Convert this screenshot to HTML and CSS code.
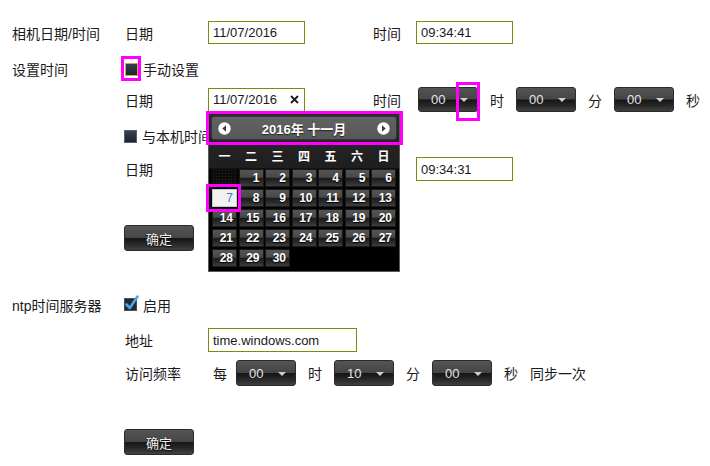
FILE: index.html
```html
<!DOCTYPE html>
<html lang="zh">
<head>
<meta charset="utf-8">
<title>时间设置</title>
<link rel="stylesheet" href="styles.css">
</head>
<body>
<div class="page">
  <div class="row r1">
    <div class="lbl">相机日期/时间</div>
    <div class="sub">日期</div>
    <div class="inp">11/07/2016</div>
    <div class="sub2">时间</div>
    <div class="inp">09:34:41</div>
  </div>
  <div class="row r2">
    <div class="lbl">设置时间</div>
    <span class="cb cb-focus"></span><span class="cbtext">手动设置</span>
  </div>
  <div class="row r3">
    <div class="lbl"></div>
    <div class="sub">日期</div>
    <div class="inp">11/07/2016<svg class="clear" width="9" height="9" viewBox="0 0 9 9"><path d="M1 1L8 8M8 1L1 8" stroke="#1a1a1a" stroke-width="1.8"/></svg></div>
    <div class="sub2 sub2-sel">时间</div>
    <div class="sel">00<span class="caret"></span></div><span class="unit">时</span>
    <div class="sel">00<span class="caret"></span></div><span class="unit">分</span>
    <div class="sel">00<span class="caret"></span></div><span class="unit">秒</span>
  </div>
  <div class="row r4">
    <div class="lbl"></div>
    <span class="cb"></span><span class="cbtext">与本机时间</span>
  </div>
  <div class="row r5">
    <div class="lbl"></div>
    <div class="sub">日期</div>
    <div class="inp inp-hidden"></div>
    <div class="sub2"></div>
    <div class="inp">09:34:31</div>
  </div>
  <div class="row rbtn1">
    <div class="lbl"></div>
    <div class="btn">确定</div>
  </div>
  <div class="row r6">
    <div class="lbl">ntp时间服务器</div>
    <svg class="cbc" width="17" height="17" viewBox="0 0 17 17"><rect x="0.5" y="4.5" width="12" height="12" fill="#1f2a38" stroke="#4a4f58"/><path d="M2.5 10.5L5.8 14L13.5 2.5" fill="none" stroke="#4da3e6" stroke-width="2.6" stroke-linecap="round" stroke-linejoin="round"/></svg><span class="cbtext">启用</span>
  </div>
  <div class="row r7">
    <div class="lbl"></div>
    <div class="sub">地址</div>
    <div class="inp inp-wide">time.windows.com</div>
  </div>
  <div class="row r8">
    <div class="lbl"></div>
    <div class="sub">访问频率</div>
    <span class="every">每</span>
    <div class="sel">00<span class="caret"></span></div><span class="unit">时</span>
    <div class="sel">10<span class="caret"></span></div><span class="unit">分</span>
    <div class="sel">00<span class="caret"></span></div><span class="unit">秒</span>
    <span class="sync">同步一次</span>
  </div>
  <div class="row rbtn2">
    <div class="lbl"></div>
    <div class="btn">确定</div>
  </div>

  <div class="cal">
    <div class="cal-head">
      <svg width="13" height="13" viewBox="0 0 13 13"><circle cx="6.5" cy="6.5" r="6.2" fill="#fff"/><path d="M8 3.3L4.3 6.5L8 9.7Z" fill="#3a3a3a"/></svg>
      <span class="cal-title">2016年 十一月</span>
      <svg width="13" height="13" viewBox="0 0 13 13"><circle cx="6.5" cy="6.5" r="6.2" fill="#fff"/><path d="M5 3.3L8.7 6.5L5 9.7Z" fill="#3a3a3a"/></svg>
    </div>
    <div class="cal-days">
      <span>一</span><span>二</span><span>三</span><span>四</span><span>五</span><span>六</span><span>日</span>
    </div>
    <div class="cal-grid">
      <span class="empty"></span><span class="d">1</span><span class="d">2</span><span class="d">3</span><span class="d">4</span><span class="d">5</span><span class="d">6</span>
      <span class="d today">7</span><span class="d">8</span><span class="d">9</span><span class="d">10</span><span class="d">11</span><span class="d">12</span><span class="d">13</span>
      <span class="d">14</span><span class="d">15</span><span class="d">16</span><span class="d">17</span><span class="d">18</span><span class="d">19</span><span class="d">20</span>
      <span class="d">21</span><span class="d">22</span><span class="d">23</span><span class="d">24</span><span class="d">25</span><span class="d">26</span><span class="d">27</span>
      <span class="d">28</span><span class="d">29</span><span class="d">30</span>
    </div>
  </div>

  <div class="hl hl-cb"></div>
  <div class="hl hl-arrow"></div>
  <div class="hl hl-head"></div>
  <div class="hl hl-today"></div>
</div>
</body>
</html>
```
FILE: styles.css
```css
html, body {
  margin: 0;
  background: #fff;
}
body {
  font-family: "Liberation Sans", "Noto Sans CJK SC", sans-serif;
  font-size: 14px;
  color: #1a1a1a;
}
.page {
  position: relative;
  width: 710px;
  height: 466px;
  box-sizing: border-box;
  padding: 21px 0 0 12px;
  overflow: hidden;
}
.row {
  display: flex;
  align-items: center;
  white-space: nowrap;
}
.lbl { width: 113px; flex: none; }
.sub { width: 83px; flex: none; }
.sub2 { width: 43px; margin-left: 68px; flex: none; }
.sub2-sel { width: 45px; }

.r1 { height: 23px; }
.r2 { height: 24px; margin-top: 13px; }
.r3 { height: 25px; margin-top: 6px; }
.r4 { height: 20px; margin-top: 14px; }
.r5 { height: 24px; margin-top: 11px; }
.rbtn1 { height: 26px; margin-top: 44px; }
.r6 { height: 20px; margin-top: 44px; }
.r7 { height: 24px; margin-top: 13px; }
.r8 { height: 26px; margin-top: 8px; }
.rbtn2 { height: 26px; margin-top: 43px; }

.inp {
  box-sizing: border-box;
  width: 97px;
  height: 23px;
  border: 1px solid #7d8b0c;
  padding-left: 4px;
  font-size: 13px;
  display: flex;
  align-items: center;
  color: #1a1a1a;
  flex: none;
}
.r3 .inp, .r5 .inp { height: 24px; }
.inp-hidden { border-color: #4a9fe0; }
.inp-wide { width: 149px; height: 24px; }
.clear { margin-left: auto; margin-right: 5px; }

.cb {
  width: 13px;
  height: 13px;
  box-sizing: border-box;
  border: 1px solid #59606a;
  background: linear-gradient(to bottom, #34404e, #1b2530);
  flex: none;
}
.cb-focus { border-color: #d9a05a; }
.cbtext { margin-left: 5px; }
.r4 .cb { margin-left: -1px; }
.cbc { margin-left: -1px; margin-top: -6px; flex: none; }
.r6 .cbtext { margin-left: 2px; }

.sel {
  box-sizing: border-box;
  width: 60px;
  height: 25px;
  border: 1px solid #2b2b2b;
  border-radius: 3px;
  background: linear-gradient(to bottom, #545454 0%, #454545 48%, #151515 52%, #262626 74%, #404040 100%);
  color: #e4e4e4;
  font-size: 13px;
  display: flex;
  align-items: center;
  padding: 0 9px 0 12px;
  flex: none;
}
.r8 .sel { height: 26px; }
.caret {
  margin-left: auto;
  width: 0;
  height: 0;
  border-left: 4px solid transparent;
  border-right: 4px solid transparent;
  border-top: 4px solid #cfcfcf;
  margin-top: 1px;
}
.unit { margin: 0 12px; }
.every { margin-left: 5px; margin-right: 9px; }

.btn {
  box-sizing: border-box;
  width: 70px;
  height: 26px;
  margin-left: -1px;
  border: 1px solid #2b2b2b;
  border-radius: 3px;
  background: linear-gradient(to bottom, #555 0%, #464646 48%, #161616 52%, #272727 74%, #414141 100%);
  color: #f2f2f2;
  font-size: 13px;
  display: flex;
  align-items: center;
  justify-content: center;
  text-shadow: 0 1px 1px #000;
}

/* date picker popup */
.cal {
  position: absolute;
  left: 208px;
  top: 112px;
  width: 192px;
  height: 160px;
  box-sizing: border-box;
  border: 1px solid #5a5a5a;
  border-top-color: #2a2a2a;
  background: linear-gradient(to bottom, #2c2c2c 0px, #1e1e1e 55px, #050505 56px, #000 100%);
  z-index: 2;
}
.cal-head {
  box-sizing: border-box;
  height: 24px;
  margin: 3px 2px 0;
  background: linear-gradient(to bottom, #626262, #575757);
  border: 1px solid #353535;
  border-radius: 3px;
  display: flex;
  align-items: center;
  justify-content: space-between;
  padding: 0 6px 0 6px;
}
.cal-title {
  color: #fff;
  font-weight: bold;
  font-size: 13px;
  text-shadow: 0 1px 1px #222;
}
.cal-days {
  display: grid;
  grid-template-columns: repeat(7, 1fr);
  column-gap: 1.5px;
  margin: 6px 3px 0;
  height: 22px;
  align-items: center;
  text-align: center;
  color: #fff;
  font-weight: bold;
  font-size: 12px;
  line-height: 14px;
}
.cal-grid {
  display: grid;
  grid-template-columns: repeat(7, 1fr);
  grid-auto-rows: 18px;
  column-gap: 1.5px;
  row-gap: 2px;
  margin: 1px 3px 0;
}
.empty {
  background-color: #0c0c0c;
  background-image: radial-gradient(#262626 0.6px, transparent 0.8px);
  background-size: 3px 3px;
}
.d {
  box-sizing: border-box;
  border: 1px solid #1a1a1a;
  background: linear-gradient(to bottom, #555 0%, #484848 45%, #1c1c1c 52%, #2a2a2a 76%, #3e3e3e 100%);
  color: #fff;
  font-weight: bold;
  font-size: 12px;
  text-align: right;
  padding-right: 3px;
  line-height: 16px;
  text-shadow: 0 1px 1px #000;
}
.d.today {
  background: #f1f1f1;
  border-color: #c9c9c9;
  color: #2f7fc8;
  font-weight: normal;
  text-shadow: none;
}

/* magenta annotation boxes */
.hl {
  position: absolute;
  box-sizing: border-box;
  border: 3px solid #f0f;
  z-index: 5;
}
.hl-cb { left: 121px; top: 56px; width: 20px; height: 25px; }
.hl-arrow { left: 456px; top: 82px; width: 24px; height: 39px; }
.hl-head { left: 206px; top: 111px; width: 197px; height: 34px; }
.hl-today { left: 206px; top: 184px; width: 35px; height: 28px; }
```
